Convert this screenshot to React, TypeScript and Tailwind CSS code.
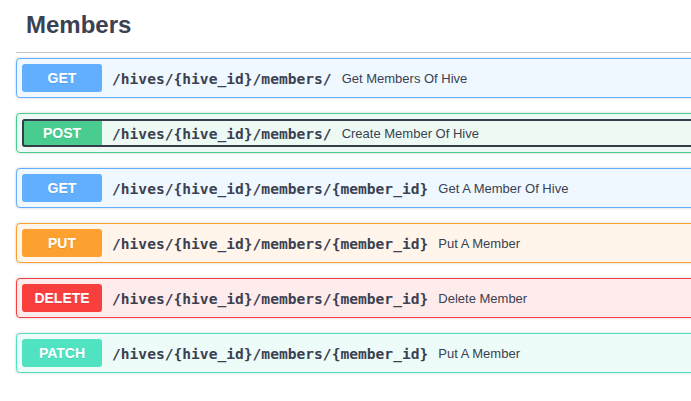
type Op = {
    method: string;
    path: string;
    summary: string;
    focused?: boolean;
};

const styles: { [key: string]: { block: string; badge: string } } = {
    GET: { block: "border-[#61affe] bg-[#eff7ff]", badge: "bg-[#61affe]" },
    POST: { block: "border-[#49cc90] bg-[#edfaf4]", badge: "bg-[#49cc90]" },
    PUT: { block: "border-[#fca130] bg-[#fff5ea]", badge: "bg-[#fca130]" },
    DELETE: { block: "border-[#f93e3e] bg-[#feebeb]", badge: "bg-[#f93e3e]" },
    PATCH: { block: "border-[#50e3c2] bg-[#edfcf9]", badge: "bg-[#50e3c2]" },
};

const ops: Op[] = [
    { method: "GET", path: "/hives/{hive_id}/members/", summary: "Get Members Of Hive" },
    { method: "POST", path: "/hives/{hive_id}/members/", summary: "Create Member Of Hive", focused: true },
    { method: "GET", path: "/hives/{hive_id}/members/{member_id}", summary: "Get A Member Of Hive" },
    { method: "PUT", path: "/hives/{hive_id}/members/{member_id}", summary: "Put A Member" },
    { method: "DELETE", path: "/hives/{hive_id}/members/{member_id}", summary: "Delete Member" },
    { method: "PATCH", path: "/hives/{hive_id}/members/{member_id}", summary: "Put A Member" },
];

export default function App() {
    return (
        <div className="w-full min-h-[401px] overflow-hidden bg-white font-['Liberation_Sans',Arial,sans-serif] text-[#3b4151]">
            <div className="ml-4 w-[740px]">
                <h3 className="pt-[9px] pb-[11px] pl-[10px] text-[24px] leading-8 font-bold border-b border-[#c4c6cb]">
                    Members
                </h3>
                <div className="mt-[5px] flex flex-col gap-[15px]">
                    {ops.map((op, i) => (
                        <div
                            key={i}
                            className={`border rounded-[4px] p-[5px] shadow-[0_0_3px_rgba(0,0,0,0.19)] ${styles[op.method].block}`}
                        >
                            <div
                                className={`relative flex items-center rounded-[3px] ${op.focused ? "after:content-[''] after:absolute after:inset-0 after:rounded-[3px] after:border-2 after:border-[#363c4a]" : ""}`}
                            >
                                <span
                                    className={`w-20 h-7 flex items-center justify-center rounded-[3px] text-white text-[14px] font-bold [text-shadow:0_1px_0_rgba(0,0,0,0.1)] ${styles[op.method].badge}`}
                                >
                                    {op.method}
                                </span>
                                <span className="pt-[2px] px-[10px] font-['DejaVu_Sans_Mono',monospace] text-[14.6px] font-bold">
                                    {op.path}
                                </span>
                                <span className="pt-[2px] text-[13px]">{op.summary}</span>
                            </div>
                        </div>
                    ))}
                </div>
            </div>
        </div>
    );
}
